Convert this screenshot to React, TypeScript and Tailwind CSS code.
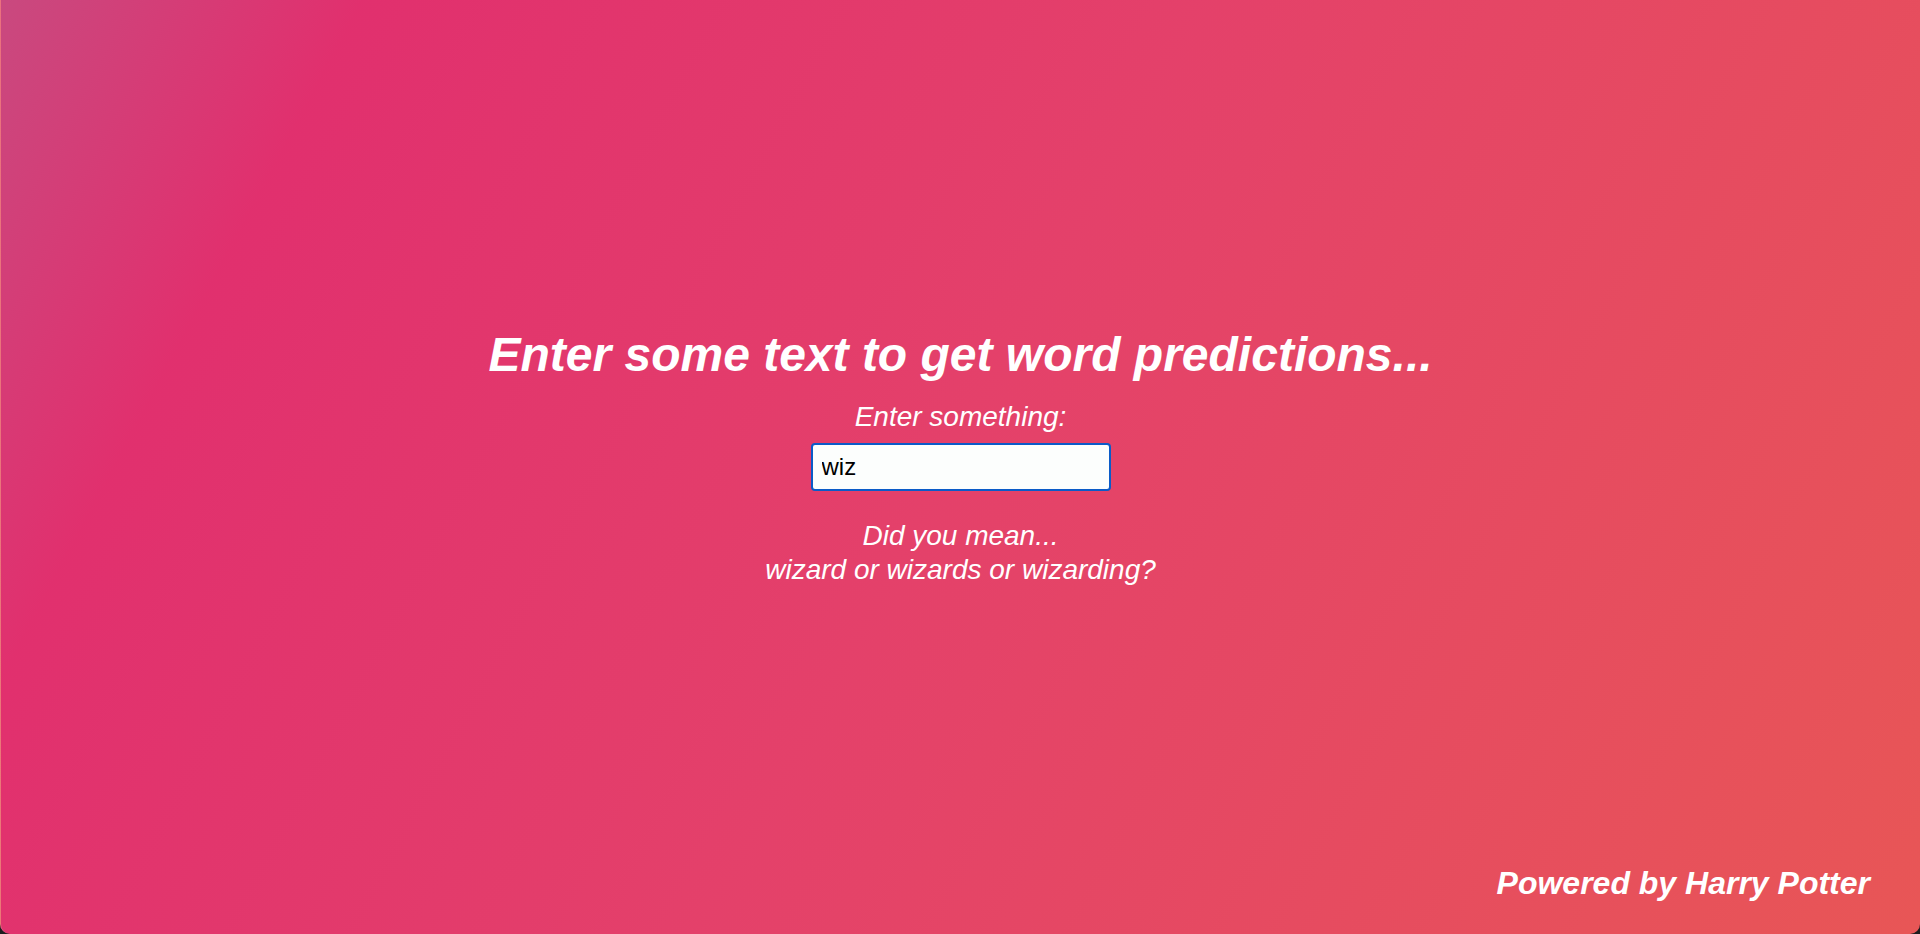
const suggestions = ["wizard", "wizards", "wizarding"];

export default function App() {
  return (
    <div className="h-[934px] w-full bg-[#1c1c1e] font-['Liberation_Sans',Arial,sans-serif]">
      <div className="flex h-full flex-col rounded-b-[10px] border-l border-white/20 bg-[linear-gradient(118deg,#c9497f_0%,#e1306e_15%,#e4416a_50%,#e85656_100%)] text-white">
        {/* Main prompt */}
        <div className="flex flex-col items-center pt-[327px]">
          <h1 className="text-[48px] leading-[56px] font-bold italic">
            Enter some text to get word predictions...
          </h1>
          <label htmlFor="q" className="mt-[18px] text-[28px] leading-[32px] italic">
            Enter something:
          </label>
          <input
            id="q"
            type="text"
            defaultValue="wiz"
            className="mt-[10px] h-[48px] w-[300px] rounded-[4px] border-2 border-[#0b5bc8] bg-[#fcfefd] px-[9px] text-[24px] text-black outline-none"
          />
          <p className="mt-[28px] text-center text-[28px] leading-[34px] italic">
            Did you mean...
            <br />
            {suggestions.join(" or ")}?
          </p>
        </div>

        {/* Footer */}
        <div className="mt-auto pr-[50px] pb-[27px] text-right text-[32px] font-bold italic">
          Powered by Harry Potter
        </div>
      </div>
    </div>
  );
}
